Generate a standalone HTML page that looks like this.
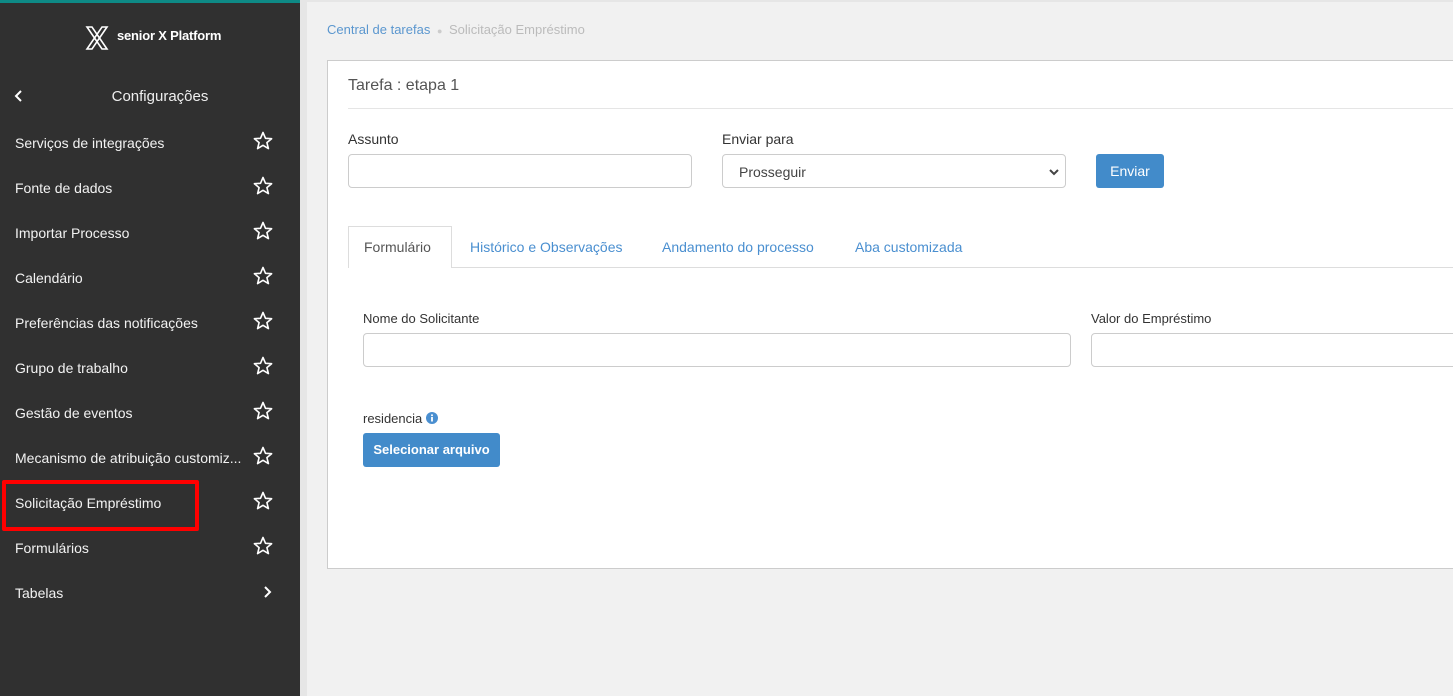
<!DOCTYPE html>
<html><head><meta charset="utf-8"><style>
*{box-sizing:border-box;margin:0;padding:0}
body{width:1453px;height:696px;overflow:hidden;font-family:"Liberation Sans",sans-serif;background:#f1f1f1;position:relative}
.sb{position:absolute;left:0;top:0;width:300px;height:696px;background:#303030;color:#fff;border-top:3px solid #0e8a86}
.item{position:absolute;left:15px;font-size:14px;color:#f2f2f2}
.star{position:absolute;left:253px;width:20px;height:20px}
.abs{position:absolute}
.lbl{position:absolute;font-size:14px;color:#333}
.inp{position:absolute;border:1px solid #ccc;border-radius:4px;background:#fff}
.btn{position:absolute;background:#428bca;color:#fff;border-radius:3px;font-size:14px;text-align:center;font-weight:bold}
.tab{position:absolute;top:239px;font-size:14px;color:#4a8fd0}
</style></head><body>
<div class="sb">
<svg class="abs" style="left:84px;top:22px" width="26" height="26" viewBox="0 0 26 26"><path d="M3 2 L8 2 L23 24 L18 24 Z M23 2 L18 2 L3 24 L8 24 Z" fill="none" stroke="#fff" stroke-width="1.6"/></svg>
<div class="abs" style="left:117px;top:25px;font-size:13px;font-weight:bold;letter-spacing:-0.2px">senior X Platform</div>
<svg class="abs" style="left:13px;top:86px" width="12" height="14" viewBox="0 0 12 14"><path d="M8 2 L3 7 L8 12" fill="none" stroke="#fff" stroke-width="2"/></svg>
<div class="abs" style="left:0;width:320px;text-align:center;top:85px;font-size:15px;color:#eee">Configurações</div>
<div class="item" style="top:132px">Serviços de integrações</div>
<div class="item" style="top:177px">Fonte de dados</div>
<div class="item" style="top:222px">Importar Processo</div>
<div class="item" style="top:267px">Calendário</div>
<div class="item" style="top:312px">Preferências das notificações</div>
<div class="item" style="top:357px">Grupo de trabalho</div>
<div class="item" style="top:402px">Gestão de eventos</div>
<div class="item" style="top:447px">Mecanismo de atribuição customiz...</div>
<div class="item" style="top:492px">Solicitação Empréstimo</div>
<div class="item" style="top:537px">Formulários</div>
<div class="item" style="top:582px">Tabelas</div>
<div class="abs" style="left:2px;top:477px;width:197px;height:51px;border:4px solid #f00;border-radius:2px"></div>
<svg class="abs" style="left:261px;top:582px" width="12" height="14" viewBox="0 0 12 14"><path d="M4 2 L9 7 L4 12" fill="none" stroke="#fff" stroke-width="2"/></svg>
</div>
<svg width="0" height="0" style="position:absolute"><defs><path id="st" d="M10 1.5 L12.5 7.3 L18.6 7.7 L13.9 11.6 L15.4 17.6 L10 14.3 L4.6 17.6 L6.1 11.6 L1.4 7.7 L7.5 7.3 Z" fill="none" stroke="#fff" stroke-width="1.6" stroke-linejoin="round"/></defs></svg>
<svg class="star" style="top:131px" viewBox="0 0 20 20"><use href="#st"/></svg>
<svg class="star" style="top:176px" viewBox="0 0 20 20"><use href="#st"/></svg>
<svg class="star" style="top:221px" viewBox="0 0 20 20"><use href="#st"/></svg>
<svg class="star" style="top:266px" viewBox="0 0 20 20"><use href="#st"/></svg>
<svg class="star" style="top:311px" viewBox="0 0 20 20"><use href="#st"/></svg>
<svg class="star" style="top:356px" viewBox="0 0 20 20"><use href="#st"/></svg>
<svg class="star" style="top:401px" viewBox="0 0 20 20"><use href="#st"/></svg>
<svg class="star" style="top:446px" viewBox="0 0 20 20"><use href="#st"/></svg>
<svg class="star" style="top:491px" viewBox="0 0 20 20"><use href="#st"/></svg>
<svg class="star" style="top:536px" viewBox="0 0 20 20"><use href="#st"/></svg>
<div class="abs" style="left:300px;top:0;width:7px;height:696px;background:#e6e6e6"></div>
<div class="abs" style="left:307px;top:0;width:1146px;height:2px;background:#e6e6e6"></div>
<div class="abs" style="left:327px;top:22px;font-size:13px;color:#5b97cf">Central de tarefas <span style="color:#ccc;font-size:9px;margin:0 3px">●</span> <span style="color:#bbb">Solicitação Empréstimo</span></div>
<div class="abs" style="left:327px;top:60px;width:1140px;height:509px;background:#fff;border:1px solid #ccc"></div>
<div class="abs" style="left:348px;top:77px;font-size:16px;color:#555">Tarefa : etapa 1</div>
<div class="abs" style="left:348px;top:108px;width:1110px;height:1px;background:#e5e5e5"></div>
<div class="lbl" style="left:348px;top:131px">Assunto</div>
<div class="inp" style="left:348px;top:154px;width:344px;height:34px"></div>
<div class="lbl" style="left:722px;top:131px">Enviar para</div>
<div class="inp" style="left:722px;top:154px;width:344px;height:34px;font-size:14px;color:#444;padding:9px 0 0 16px">Prosseguir
<svg class="abs" style="left:326px;top:13px" width="10" height="8" viewBox="0 0 10 8"><path d="M1 2 L5 6 L9 2" fill="none" stroke="#444" stroke-width="2"/></svg></div>
<div class="btn" style="left:1096px;top:154px;width:68px;height:34px;line-height:34px;font-weight:normal">Enviar</div>
<div class="abs" style="left:348px;top:267px;width:1110px;height:1px;background:#ddd"></div>
<div class="abs" style="left:348px;top:226px;width:104px;height:42px;background:#fff;border:1px solid #ddd;border-bottom:none"></div>
<div class="tab" style="left:364px;color:#555">Formulário</div>
<div class="tab" style="left:470px">Histórico e Observações</div>
<div class="tab" style="left:662px">Andamento do processo</div>
<div class="tab" style="left:855px">Aba customizada</div>
<div class="lbl" style="left:363px;top:311px;font-size:13px">Nome do Solicitante</div>
<div class="inp" style="left:363px;top:333px;width:708px;height:34px"></div>
<div class="lbl" style="left:1091px;top:311px;font-size:13px">Valor do Empréstimo</div>
<div class="inp" style="left:1091px;top:333px;width:400px;height:34px"></div>
<div class="lbl" style="left:363px;top:411px;font-size:13px">residencia <svg width="12" height="12" viewBox="0 0 12 12" style="vertical-align:-1px"><circle cx="6" cy="6" r="6" fill="#4a8fd0"/><rect x="5.1" y="5" width="1.8" height="4.5" fill="#fff"/><circle cx="6" cy="3.2" r="1" fill="#fff"/></svg></div>
<div class="btn" style="left:363px;top:433px;width:137px;height:34px;line-height:34px;font-size:13px">Selecionar arquivo</div>
</body></html>
